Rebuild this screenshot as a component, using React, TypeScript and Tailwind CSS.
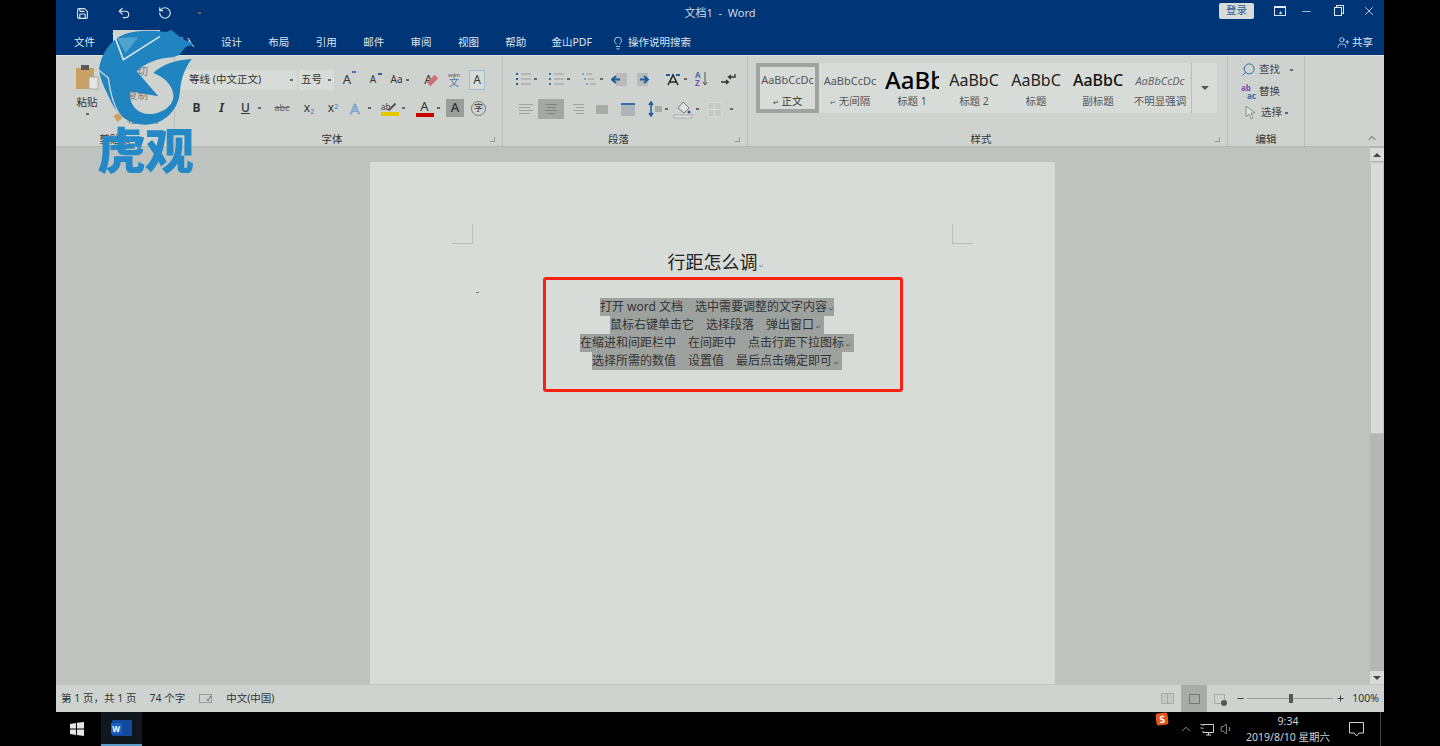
import type { ReactNode } from 'react'
import { ChevronUp, Lightbulb, Minus, Plus, RotateCcw, Save, Search, Undo2, UserPlus, Volume1, X } from 'lucide-react'

const tabs = ['开始', '插入', '设计', '布局', '引用', '邮件', '审阅', '视图', '帮助']

const lines = [
  '打开 word 文档　选中需要调整的文字内容',
  '鼠标右键单击它　选择段落　弹出窗口',
  '在缩进和间距栏中　在间距中　点击行距下拉图标',
  '选择所需的数值　设置值　最后点击确定即可',
]

const styles = [
  { sample: 'AaBbCcDc', label: '无间隔', mark: true, cls: 'justify-center text-[11px] text-[#555]' },
  { sample: 'AaBbC', label: '标题 1', mark: false, cls: 'justify-start text-[24px] font-medium text-black' },
  { sample: 'AaBbC', label: '标题 2', mark: false, cls: 'justify-center text-[16px] text-[#222]' },
  { sample: 'AaBbC', label: '标题', mark: false, cls: 'justify-center text-[16px] text-[#222]' },
  { sample: 'AaBbC', label: '副标题', mark: false, cls: 'justify-center text-[16px] font-medium text-[#111]' },
  { sample: 'AaBbCcDc', label: '不明显强调', mark: false, cls: 'justify-center text-[11px] italic text-[#666]' },
]

// tiny dropdown marker used all over the ribbon
function Dot({ className = 'mx-[3px]' }: { className?: string }) {
  return <span className={`block h-[2px] w-[3px] shrink-0 bg-[#666] ${className}`} />
}

function Group({ label, launcher = false, className, children }: { label: string; launcher?: boolean; className: string; children: ReactNode }) {
  return (
    <div className={`relative flex h-full shrink-0 flex-col border-r border-[#b9bdb9] ${className}`}>
      <div className="flex-1">{children}</div>
      <div className={`h-[15px] text-center text-[10.5px] leading-[17px] text-[#333] ${launcher ? 'pr-[13px]' : ''}`}>{label}</div>
      {launcher && <span className="absolute bottom-[4px] right-[7px] h-[5px] w-[5px] border-b border-r border-[#999]" />}
    </div>
  )
}

function Lines({ className = '', aligned = 'left' }: { className?: string; aligned?: 'left' | 'center' | 'right' }) {
  const xs = aligned === 'right' ? [3, 6, 3, 6] : aligned === 'center' ? [1, 3, 1, 3] : [0, 0, 0, 0]
  return (
    <svg width="14" height="12" viewBox="0 0 14 12" className={className}>
      {xs.map((x, i) => (
        <rect key={i} x={x} y={1 + i * 3} width={aligned === 'left' && i % 2 ? 11 : 14 - x * (aligned === 'center' ? 2 : 1)} height="1" fill="currentColor" />
      ))}
    </svg>
  )
}

function ListIcon({ color = '#1f5f9e', dash = false }: { color?: string; dash?: boolean }) {
  return (
    <svg width="15" height="14" viewBox="0 0 15 14">
      {[2, 7, 12].map((y, i) => (
        <g key={y}>
          <rect x={dash ? i * 2 : 0} y={y - 1} width="2" height="2" fill={color} />
          <rect x={dash ? i * 2 + 4 : 5} y={y - 0.5} width={dash ? 6 : 10} height="1" fill="#9a9e9a" />
        </g>
      ))}
    </svg>
  )
}

function IndentIcon({ flip = false }: { flip?: boolean }) {
  return (
    <svg width="16" height="13" viewBox="0 0 16 13">
      <rect x={flip ? 0 : 5} y="0" width="11" height="13" fill="#b8bcb8" />
      <path d={flip ? 'M3 6.5h7M7 3l4 3.5L7 10' : 'M13 6.5H6M9 3 5 6.5 9 10'} transform={flip ? '' : 'translate(-4 0)'} stroke="#1c5c9c" strokeWidth="2" fill="none" />
    </svg>
  )
}

function PasteIcon() {
  return (
    <svg width="26" height="26" viewBox="0 0 26 26">
      <rect x="2" y="4" width="18" height="21" fill="#c9a165" />
      <rect x="7" y="1" width="8" height="5" fill="#5a5a58" />
      <path d="M15 13h9v12h-9z" fill="#e2e5e2" stroke="#a8aca8" />
    </svg>
  )
}

function GrowA({ size, down = false }: { size: string; down?: boolean }) {
  return (
    <span className={`relative w-[26px] text-center ${size}`}>
      A
      <span className={`absolute right-[4px] top-[1px] h-[2px] w-[4px] ${down ? 'bg-[#2f5f94]' : 'bg-[#3b78b5]'}`} />
    </span>
  )
}

function TigerLogo() {
  // watermark over the ribbon corner: swirl mark with the 虎观 wordmark below it
  return (
    <div className="absolute left-[95px] top-[28px] h-[150px] w-[100px]">
      <svg width="100" height="100" viewBox="0 0 300 300" className="absolute left-0 top-0">
        <path
          fill="#1f84c0"
          d="M12 122C18 80 45 35 90 18c40-13 85-10 125-6l13-7 34 27 33 18-23 6-20 26-20 6c-42 2-82 17-107 42l65 75-85-15c-5 35 20 68 55 68 45 0 78-28 75-58-3-30-30-55-60-65 25-25 70-40 115-42-20 27-32 57-35 97-5 60-50 100-105 100-45 0-80-25-100-65-15-35-35-65-38-103Z"
        />
        <path d="M55 15l30 80L195 25" stroke="#d3e2e6" strokeWidth="5" fill="none" />
        <path d="M66 30l64-2-38 47Z" fill="#4fa3cf" />
        <path d="M10 125l30 25c5 40 15 85 38 115" stroke="#cfd8d8" strokeWidth="4" fill="none" />
        <path d="M55 265l15-10 12 15-14 13Z" fill="#c9a165" />
      </svg>
      <div className="absolute left-[2px] top-[92px] whitespace-nowrap text-[49px] font-black leading-[60px] tracking-[-1px] text-[#2489c6]">虎观</div>
    </div>
  )
}

function Ribbon() {
  return (
    <div className="flex h-[91px] shrink-0 border-t border-[#dfe2df] bg-[#cfd3d0] text-[#333]">
      <Group label="剪贴板" className="w-[119px]">
        <div className="flex">
          <div className="ml-[19px] flex w-[24px] flex-col items-center pt-[8px]">
            <PasteIcon />
            <span className="mt-[5px] whitespace-nowrap text-[10.5px] leading-[14px]">粘贴</span>
            <Dot className="mt-[4px]" />
          </div>
          <div className="ml-[28px] flex flex-col gap-[10px] pt-[8px] text-[10.5px] leading-[14px] text-[#777]">
            <span>剪切</span>
            <span>复制</span>
            <span>格式刷</span>
          </div>
        </div>
      </Group>

      <Group label="字体" launcher className="w-[328px]">
        <div className="mt-[13px] flex h-[21px] items-center pl-[5px] text-[10.5px]">
          <div className="flex h-[20px] w-[117px] items-center justify-between bg-[#d8dcd8] pl-[9px] pr-[1px]">
            <span className="whitespace-nowrap">等线 (中文正文)</span>
            <Dot />
          </div>
          <div className="ml-[2px] flex h-[20px] w-[35px] items-center justify-between bg-[#d8dcd8] pl-[2px]">
            <span className="whitespace-nowrap">五号</span>
            <Dot />
          </div>
          <GrowA size="text-[13px]" />
          <GrowA size="text-[10px]" down />
          <span className="flex w-[30px] items-center justify-center text-[10px]">Aa<Dot /></span>
          <span className="relative w-[25px] text-center text-[13px]">A<span className="absolute left-[11px] top-[8px] h-[5px] w-[11px] -rotate-45 bg-[#cf6f78]" /></span>
          <span className="flex w-[26px] flex-col items-center text-[10px] leading-[9px] text-[#4b78a8]"><span className="text-[6px] leading-[6px] text-[#555]">wén</span>文</span>
          <span className="ml-[2px] flex h-[20px] w-[16px] items-center justify-center border border-[#a9bccf] bg-[#d8dcd8] text-[12px]">A</span>
        </div>
        <div className="mt-[7px] flex h-[22px] items-center pl-[9px] text-[11px]">
          <span className="w-[25px] text-center text-[12px] font-bold">B</span>
          <span className="w-[25px] text-center text-[12px] font-bold italic">I</span>
          <span className="flex w-[36px] items-center text-[12px] font-medium"><span className="ml-[7px] underline">U</span><Dot className="ml-[8px]" /></span>
          <span className="w-[24px] text-center text-[9px] text-[#666] line-through">abc</span>
          <span className="ml-[3px] w-[24px] text-center text-[12px]">x<sub className="text-[7px] text-[#3b78b5]">2</sub></span>
          <span className="w-[24px] text-center text-[12px]">x<sup className="text-[7px] text-[#3b78b5]">2</sup></span>
          <span className="ml-[5px] flex w-[31px] items-center text-[15px] text-[#a9c4e0] [-webkit-text-stroke:0.5px_#4f82b8]">A<Dot className="ml-[8px]" /></span>
          <span className="flex w-[30px] items-center">
            <span className="relative flex w-[18px] flex-col items-start text-[8px] leading-[11px]">
              ab
              <span className="absolute right-[2px] top-[5px] h-[2px] w-[10px] -rotate-45 bg-[#555]" />
              <span className="h-[4px] w-[18px] bg-[#e3c800]" />
            </span>
            <Dot />
          </span>
          <span className="ml-[1px] flex w-[34px] items-center justify-center">
            <span className="flex w-[18px] flex-col items-center text-[13px] leading-[13px]">A<span className="h-[4px] w-[18px] bg-[#c80000]" /></span>
            <Dot />
          </span>
          <span className="flex h-[18px] w-[18px] items-center justify-center bg-[#9a9e9a] text-[13px] font-medium">A</span>
          <span className="ml-[7px] flex h-[15px] w-[15px] items-center justify-center rounded-full border border-[#777] text-[9px]">字</span>
        </div>
      </Group>

      <Group label="段落" launcher className="w-[245px]">
        <div className="ml-[13px] mt-[15px] flex h-[16px] items-center text-[#555]">
          <span className="flex w-[33px] items-center"><ListIcon /><Dot /></span>
          <span className="flex w-[33px] items-center"><ListIcon color="#3a78b4" /><Dot /></span>
          <span className="flex w-[29px] items-center"><ListIcon color="#8aa0b8" dash /><Dot /></span>
          <IndentIcon />
          <span className="ml-[10px]"><IndentIcon flip /></span>
          <span className="ml-[12px] flex w-[30px] items-center">
            <svg width="16" height="14" viewBox="0 0 16 14">
              <path d="M3 13 8 3l5 10M5 10h6" stroke="#222" strokeWidth="1.5" fill="none" />
              <path d="M1 3h4M15 3h-4" stroke="#1c5c9c" strokeWidth="2" />
            </svg>
            <Dot />
          </span>
          <svg width="14" height="16" viewBox="0 0 14 16">
            <text x="0" y="7" fontSize="8" fill="#3b6ea8" fontWeight="700">A</text>
            <text x="0" y="15" fontSize="8" fill="#7b4fa8" fontWeight="700">Z</text>
            <path d="M10 1v13M8 11l2 3 2-3" stroke="#555" fill="none" />
          </svg>
          <svg className="ml-[12px]" width="15" height="13" viewBox="0 0 15 13">
            <path d="M14 1v3H8M10 2 7.500 4l2.500 2M0 9h7M5 7l2.500 2L5 11" stroke="#333" strokeWidth="1.300" fill="none" />
          </svg>
        </div>
        <div className="ml-[11px] mt-[10px] flex h-[24px] items-center text-[#a0a4a0]">
          <span className="flex w-[24px] justify-center"><Lines /></span>
          <span className="flex h-[20px] w-[26px] items-center justify-center bg-[#a4a8a4] text-[#808480]"><Lines aligned="center" /></span>
          <span className="ml-[6px] flex w-[14px] justify-center"><Lines aligned="right" /></span>
          <span className="ml-[12px] h-[9px] w-[12px] bg-[#a8aca8]" />
          <span className="ml-[13px] h-[13px] w-[14px] border-t-2 border-[#2f6ea8] bg-[#aeb6bb]" />
          <span className="ml-[13px] flex w-[25px] items-center">
            <svg width="14" height="16" viewBox="0 0 14 16">
              <path d="M3 1v14M1 4l2-3 2 3M1 12l2 3 2-3" stroke="#1c5c9c" strokeWidth="1.500" fill="none" />
              <rect x="7" y="5" width="7" height="6" fill="#a8aca8" />
            </svg>
            <Dot />
          </span>
          <span className="flex w-[34px] items-center">
            <svg width="20" height="20" viewBox="0 0 20 20">
              <path d="M5 9 10 3l6 6-5 5Z" fill="#dfe2df" stroke="#777" />
              <circle cx="16" cy="13" r="1.500" fill="#1c5c9c" />
              <rect x="1" y="16" width="18" height="3" fill="#dfe2df" stroke="#a8aca8" />
            </svg>
            <Dot />
          </span>
          <span className="grid h-[15px] w-[15px] grid-cols-2 gap-[1px] border border-[#d8dcd8] bg-[#d8dcd8]">
            <i className="bg-[#c6cac6]" /><i className="bg-[#c6cac6]" /><i className="bg-[#c6cac6]" /><i className="bg-[#c6cac6]" />
          </span>
          <Dot className="ml-[8px]" />
        </div>
      </Group>

      <Group label="样式" launcher className="w-[480px]">
        <div className="ml-[8px] mt-[7px] flex h-[50px] w-[461px] overflow-hidden bg-[#d8dcd8]">
          <div className="flex w-[63px] shrink-0 flex-col items-center border-4 border-[#a0a4a0] pt-[3px]">
            <span className="h-[20px] text-[11px] leading-[20px] text-[#555]">AaBbCcDc</span>
            <span className="mt-[4px] text-[10.5px] leading-[14px] text-[#333]"><span className="mr-[3px] text-[7px]">↵</span>正文</span>
          </div>
          {styles.map((s) => (
            <div key={s.label} className="flex w-[62px] shrink-0 flex-col items-center overflow-hidden pt-[7px]">
              <span className={`flex h-[20px] w-[54px] items-center overflow-hidden whitespace-nowrap leading-none ${s.cls}`}>{s.sample}</span>
              <span className="mt-[4px] whitespace-nowrap text-[10.5px] leading-[14px] text-[#555]">
                {s.mark && <span className="mr-[3px] text-[7px]">↵</span>}
                {s.label}
              </span>
            </div>
          ))}
          <div className="flex flex-1 items-center justify-center border-l border-[#b9bdb9]">
            <span className="border-x-[4px] border-t-[4px] border-x-transparent border-t-[#555]" />
          </div>
        </div>
      </Group>

      <Group label="编辑" className="w-[77px]">
        <div className="flex flex-col pl-[13px] pt-[3px] text-[10.5px] leading-[21px] text-[#444]">
          <span className="flex h-[21px] items-center gap-[3px]"><Search size={15} strokeWidth={1.6} className="-scale-x-100 text-[#2f6ea8]" />查找<Dot className="ml-[7px]" /></span>
          <span className="mt-[1px] flex h-[21px] items-center gap-[3px]">
            <span className="flex w-[15px] flex-col text-[8px] font-bold leading-[8px]"><span className="text-[#7b4fa8]">ab</span><span className="text-right text-[#2f6ea8]">ac</span></span>替换
          </span>
          <span className="flex h-[21px] items-center gap-[5px] pl-[4px]">
            <svg width="11" height="15" viewBox="0 0 11 15"><path d="M1 1v11l3-3 2 5 2-1-2-5h4Z" fill="#dfe2df" stroke="#8a8e8a" /></svg>
            选择<Dot className="ml-[-2px]" />
          </span>
        </div>
      </Group>

      <div className="flex flex-1 items-end justify-end pb-[2px] pr-[6px]">
        <ChevronUp size={12} strokeWidth={2} className="text-[#555]" />
      </div>
    </div>
  )
}

function Page() {
  return (
    <div className="ml-[314px] mt-[15px] h-[540px] w-[685px] shrink-0 bg-[#d8dcd8] text-[#333]">
      <div className="flex justify-between px-[82px] pt-[62px]">
        <span className="h-[20px] w-[21px] border-b border-r border-[#b9bdb9]" />
        <span className="h-[20px] w-[21px] border-b border-l border-[#b9bdb9]" />
      </div>
      <div className="mt-[5px] flex h-[26px] items-center justify-center pl-[6px] text-[18px] leading-[26px] text-[#222]">
        行距怎么调<span className="ml-[1px] mt-[8px] text-[6px] text-[#888]">↵</span>
      </div>
      <div className="mt-[2px] flex">
        <span className="ml-[106px] mt-[15px] h-[1px] w-[3px] bg-[#777]" />
        <div className="ml-[64px] flex h-[115px] w-[360px] flex-col items-center rounded-[3px] border-[3px] border-[#fa2014] pr-[12px] pt-[18px] text-[12px] leading-[18px]">
          {lines.map((line, i) => (
            <div key={line} className={`h-[18px] w-fit whitespace-nowrap bg-[#9ea29e] ${i === 0 ? '' : 'pr-[3px] [word-spacing:1.5px]'}`}>
              {line}<span className="ml-[2px] text-[6px] text-[#555]">↵</span>
            </div>
          ))}
        </div>
      </div>
    </div>
  )
}

export default function App() {
  return (
    <div className="relative flex h-[746px] w-[1440px] flex-col overflow-hidden bg-black [font-family:'Noto_Sans','Noto_Sans_CJK_SC',sans-serif]">
      <div className="flex h-[712px] shrink-0">
        <div className="w-[56px] shrink-0" />
        <div className="flex w-[1328px] shrink-0 flex-col">
          <div className="grid h-[30px] shrink-0 grid-cols-[1fr_auto_1fr] items-center bg-[#003578] pb-[4px] text-[#dfe6ee]">
            <div className="flex items-center pl-[20px]">
              <Save size={13} strokeWidth={2} />
              <Undo2 size={14} strokeWidth={2} className="ml-[28px]" />
              <RotateCcw size={14} strokeWidth={2} className="ml-[27px]" />
              <Dot className="ml-[26px]" />
            </div>
            <div className="text-[11px] text-[#cfd8e4]">文档1 &nbsp;-&nbsp; Word</div>
            <div className="mb-[4px] flex items-center justify-end">
              <span className="mr-[20px] flex h-[16px] w-[35px] items-center justify-center rounded-[2px] bg-[#d8dcd8] text-[10.5px] text-[#2d5a94]">登录</span>
              <span className="flex h-[10px] w-[12px] items-center justify-center border-x border-b border-t-2 border-[#dfe6ee] text-[6px] leading-none">▴</span>
              <Minus size={13} strokeWidth={1.4} className="ml-[14px]" />
              <span className="relative ml-[21px] h-[9px] w-[8px] border border-[#dfe6ee] bg-[#003578] shadow-[2px_-2px_0_-1px_#003578,2px_-2px_0_0_#dfe6ee]" />
              <X size={14} strokeWidth={1.4} className="ml-[20px] mr-[8px]" />
            </div>
          </div>
          <div className="flex h-[25px] shrink-0 items-center bg-[#003578] text-[10.5px] text-[#dfe6ee]">
            <span className="w-[57px] pl-[18px]">文件</span>
            {tabs.map((t, i) => (
              <span key={t} className={`flex h-[25px] w-[47.4px] items-center justify-center ${i === 0 ? 'bg-[#cfd3d0] text-[#333]' : ''}`}>{t}</span>
            ))}
            <span className="ml-[12px]">金山PDF</span>
            <Lightbulb size={14} strokeWidth={1.4} className="ml-[19px]" />
            <span className="ml-[3px]">操作说明搜索</span>
            <span className="ml-auto mr-[11px] flex items-center gap-[2px]"><UserPlus size={13} strokeWidth={1.4} />共享</span>
          </div>
          <Ribbon />
          <div className="flex min-h-0 flex-1 overflow-hidden border-t border-[#b4b8b4] bg-[#bfc3bf]">
            <div className="min-w-0 flex-1"><Page /></div>
            <div className="flex w-[14px] shrink-0 flex-col bg-[#b4b8b4]">
              <div className="mt-[1px] flex h-[13px] items-center justify-center bg-[#d8dcd8]">
                <span className="border-x-[4px] border-b-[4px] border-x-transparent border-b-[#444]" />
              </div>
              <div className="mt-[1px] h-[272px] border border-[#bfc3bf] bg-[#d8dcd8]" />
              <div className="flex-1" />
              <div className="flex h-[13px] items-center justify-center bg-[#d8dcd8]">
                <span className="border-x-[4px] border-t-[4px] border-x-transparent border-t-[#444]" />
              </div>
            </div>
          </div>
          <div className="flex h-[28px] shrink-0 items-center border-t border-[#bfc3bf] bg-[#cfd3d0] pl-[5px] text-[10.5px] text-[#333]">
            <span>第 1 页，共 1 页</span>
            <span className="ml-[13px]">74 个字</span>
            <span className="ml-[14px] flex h-[9px] w-[13px] items-center justify-end border border-[#999] text-[7px] leading-none">✓</span>
            <span className="ml-[14px]">中文(中国)</span>
            <span className="ml-auto flex h-[27px] items-center">
              <span className="grid h-[11px] w-[13px] grid-cols-2 gap-[1px] bg-[#a8aca8] p-[1px]"><i className="bg-[#c4c8c4]" /><i className="bg-[#c4c8c4]" /></span>
              <span className="ml-[7px] flex h-[27px] w-[26px] items-center justify-center bg-[#a8aca8]"><span className="h-[10px] w-[11px] border border-[#777]" /></span>
              <span className="relative ml-[7px] h-[10px] w-[11px] border border-[#a8aca8]"><span className="absolute bottom-[-3px] right-[-3px] h-[6px] w-[6px] rounded-full bg-[#555]" /></span>
              <Minus size={9} strokeWidth={2.5} className="ml-[11px]" />
              <span className="relative ml-[2px] h-[1px] w-[86px] bg-[#999]"><span className="absolute left-[42px] top-[-4px] h-[9px] w-[4px] bg-[#555]" /></span>
              <Plus size={9} strokeWidth={2.5} className="ml-[3px]" />
              <span className="ml-[7px] mr-[5px]">100%</span>
            </span>
          </div>
        </div>
      </div>

      <div className="flex h-[34px] shrink-0 items-center bg-black text-[#d2d2d2]">
        <svg className="ml-[70px]" width="14" height="14" viewBox="0 0 14 14" fill="#e6e6e6">
          <path d="M0 2 6 1v5.500H0ZM7 .8 14 0v6.500H7ZM0 7.500h6V13l-6-1ZM7 7.500h7V14l-7-1Z" />
        </svg>
        <div className="ml-[17px] flex h-[34px] w-[41px] items-center justify-center border-b-2 border-[#5a9bc8] bg-[#10181e]">
          <span className="relative h-[16px] w-[20px] rounded-[1px] bg-[#124a9e]">
            <span className="absolute left-[-1px] top-[3px] flex h-[11px] w-[11px] items-center justify-center bg-[#1c5fc0] text-[8px] font-bold leading-none text-white">W</span>
          </span>
        </div>
        <span className="ml-auto flex h-[34px] items-center">
          <span className="mb-[20px] flex h-[12px] w-[12px] -rotate-6 items-center justify-center rounded-[2px] bg-[#e2571e] text-[10px] font-bold leading-none text-white">S</span>
          <ChevronUp size={14} strokeWidth={1.2} className="ml-[11px]" />
          <svg className="ml-[7px]" width="14" height="13" viewBox="0 0 14 13" fill="none" stroke="currentColor">
            <path d="M3 1.500h10.500v8H3M3 1.500V3M3 5v1M3 8v1.500M6 12h5M8.500 9.500V12M.5 1.500h2M.5 5h2" />
          </svg>
          <Volume1 size={14} strokeWidth={1.2} className="ml-[6px]" />
          <span className="ml-[6px] flex w-[96px] flex-col items-center text-[10.5px] leading-[16px]">
            <span>9:34</span>
            <span className="whitespace-nowrap">2019/8/10 星期六</span>
          </span>
          <svg className="ml-[13px]" width="15" height="15" viewBox="0 0 15 15" fill="none" stroke="currentColor">
            <path d="M.5.500h14v10.500H10l-2.500 3-2.500-3H.5Z" />
          </svg>
          <span className="ml-[16px] h-[34px] w-[1px] bg-[#444]" />
          <span className="w-[59px]" />
        </span>
      </div>

      <TigerLogo />
    </div>
  )
}
